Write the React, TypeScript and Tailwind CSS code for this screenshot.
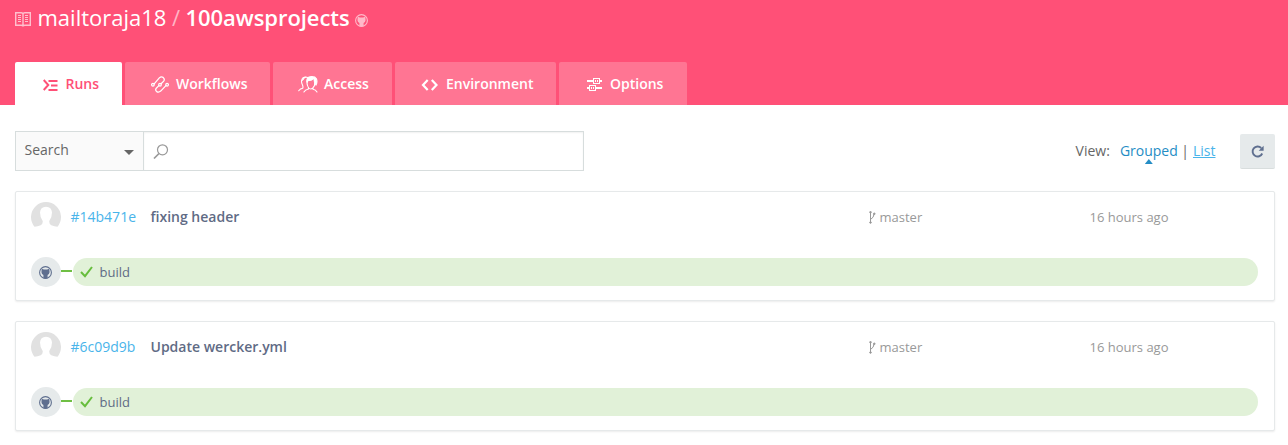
import React from "react";

type IconProps = { className?: string };

function BookIcon({ className }: IconProps) {
  return (
    <svg className={className} width="16" height="15" viewBox="0 0 16 15" fill="none" stroke="currentColor">
      <path d="M.7.700h5.500Q8 .7 8 2Q8 .7 9.800.700h5.500v12.600H9.800Q8 13.400 8 14.600Q8 13.400 6.200 13.300H.700zM8 2v12" strokeWidth="1.400" />
      <path d="M3 3.500h3M3 5.500h3M3 7.500h3M3 9.500h3M10 3.500h3M10 5.500h3M10 7.500h3M10 9.500h3" />
    </svg>
  );
}

function CatIcon({ className }: IconProps) {
  return (
    <svg className={className} viewBox="0 0 13 13" fill="none">
      <circle cx="6.500" cy="6.500" r="5.900" stroke="currentColor" strokeWidth="1.100" />
      <path
        d="M2.800 2.700L4.900 3.500H8.100L10.200 2.700L10.500 5V6.500Q10.300 8.500 8.600 8.900V12.200Q6.500 12.800 4.400 12.200V8.900Q2.700 8.500 2.500 6.500V5z"
        fill="currentColor"
      />
    </svg>
  );
}

function RunsIcon() {
  return (
    <svg width="15" height="12" viewBox="0 0 15 12" fill="none" stroke="currentColor" strokeWidth="2">
      <path d="M.7 1l4.600 5l-4.600 5" />
      <path d="M5.500 2H14.500M8 6.500H14.500M5.500 11H14.500" />
    </svg>
  );
}

function WorkflowsIcon() {
  return (
    <svg width="18" height="17" viewBox="0 0 18 17" fill="none" stroke="currentColor" strokeWidth="1.250" strokeLinecap="round">
      <circle cx="1.900" cy="8.700" r="1.300" />
      <circle cx="9" cy="8.700" r="1.300" />
      <circle cx="16.100" cy="8.700" r="1.300" />
      <path d="M3.200 7.900L8.300 1.900Q10.200.2 12.100 1.400Q14.100 3.100 12.700 5.200L10.100 7.800M7.900 9.600L5.300 12.200Q3.900 14.200 5.700 15.600Q7.700 16.800 9.700 15.100L14.900 9.600" />
    </svg>
  );
}

function AccessIcon() {
  return (
    <svg width="20" height="17" viewBox="0 0 20 17" fill="none" stroke="currentColor" strokeWidth="1.100" strokeLinecap="round">
      <path d="M9.500 1.500Q5 .1 4 3.200Q2.800 6 4.500 9Q5.300 11 4.700 12.200Q2.300 12.500 .7 14.700M4 4.600Q5.500 3.500 6 2.100Q7.500.4 9.500 1.500" />
      <path d="M9.300 4.500Q8.300 8.400 10.400 11.200V13Q7.200 13.600 5.900 16M16.700 6.500Q17 10.200 15 11.700V13.200Q17.700 13.600 19 16M10.400 11.500Q13 14.300 15 11.700" />
      <path d="M8.900 6Q8.300 1.500 12 .8Q17 .1 18.400 2.800Q19.700 6 18 9.100Q16.600 7.300 16.500 4.500Q14 6 8.900 6z" fill="currentColor" />
      <path d="M10 5.300Q13.900 5.300 15.700 3.300V9Q15 12 12.900 12.200Q10.300 12 10 8.600z" fill="#ff7593" stroke="none" />
    </svg>
  );
}

function EnvironmentIcon() {
  return (
    <svg width="17" height="12" viewBox="0 0 17 12" fill="none" stroke="currentColor" strokeWidth="2.200">
      <path d="M6.700 1L2 6l4.700 5M10.800 1L15.500 6l-4.700 5" />
    </svg>
  );
}

function OptionsIcon() {
  return (
    <svg width="15" height="14" viewBox="0 0 15 14" fill="none" stroke="currentColor" shapeRendering="crispEdges">
      <path d="M0 3H6M13 3H15M0 10H2M9 10H15" strokeWidth="2" />
      <rect x="6.500" y=".5" width="6" height="5" />
      <rect x="2.500" y="7.500" width="6" height="5" />
      <path d="M8.500 2v2M10.500 2v2M4.500 9v2M6.500 9v2" />
    </svg>
  );
}

const tabs = [
  { label: "Runs", icon: <RunsIcon />, box: "w-[107px] bg-white text-[#ff5077]", slot: "ml-[27.500px] w-[23px] pt-[2px]" },
  { label: "Workflows", icon: <WorkflowsIcon />, box: "w-[145px] bg-[#ff7593] text-white", slot: "ml-[26px] w-[25px] pt-[2px]" },
  { label: "Access", icon: <AccessIcon />, box: "w-[119px] bg-[#ff7593] text-white", slot: "ml-[25px] w-[26px] pt-[2px]" },
  { label: "Environment", icon: <EnvironmentIcon />, box: "w-[161px] bg-[#ff7593] text-white", slot: "ml-[26px] w-[25px] pt-[3px]" },
  { label: "Options", icon: <OptionsIcon />, box: "w-[128px] bg-[#ff7593] text-white", slot: "ml-[28px] w-[23px] pt-[3px]" },
];

const runs = [
  { hash: "#14b471e", message: "fixing header", branch: "master", time: "16 hours ago" },
  { hash: "#6c09d9b", message: "Update wercker.yml", branch: "master", time: "16 hours ago" },
];

function Avatar() {
  return (
    <svg className="mt-[10px] shrink-0" width="30" height="30" viewBox="0 0 30 30">
      <path
        d="M3.500 24.700A15 15 0 1 1 26.500 24.700Q23.500 24.500 20.300 23.200Q17.900 22 18.300 19Q21 15.500 21 10.500Q20.700 5 15 4.700Q9.300 5 9 10.500Q9 15.500 11.700 19Q12.100 22 9.700 23.200Q6.500 24.500 3.500 24.700z"
        fill="#e1e1e1"
      />
    </svg>
  );
}

function BranchIcon() {
  return (
    <svg width="7" height="13" viewBox="0 0 7 13" fill="none" stroke="currentColor" strokeWidth="1">
      <path d="M1.500 1.500v10M1.500 8.500Q5 6.500 5 3" />
      <circle cx="1.500" cy="1.200" r=".8" fill="currentColor" />
      <circle cx="5.300" cy="2.800" r=".8" fill="currentColor" />
      <circle cx="1.500" cy="11.500" r=".8" fill="currentColor" />
    </svg>
  );
}

function RunCard({ run }: { run: (typeof runs)[number] }) {
  return (
    <article className="h-[110px] rounded-[2px] border border-[#e6e9ea] bg-white pl-[15px] shadow-[0_1px_2px_rgba(0,0,0,0.08)]">
      <div className="flex h-[50px]">
        <Avatar />
        <a className="ml-[9.500px] mt-[15px] w-[80px] text-sm text-[#49b4ea]">{run.hash}</a>
        <span className="mt-[15px] w-[718.500px] text-sm font-semibold text-[#5f6b85]">{run.message}</span>
        <span className="mt-[15px] flex w-[220.500px] gap-[3.500px] text-[13px] leading-5 text-[#999]">
          <span className="pt-[4px]"><BranchIcon /></span>
          {run.branch}
        </span>
        <span className="mt-[15px] text-[13px] leading-5 text-[#999]">{run.time}</span>
      </div>
      <div className="mt-[15px] flex h-[30px] items-center">
        <span className="flex size-[30px] items-center justify-center rounded-full bg-[#e6eaeb] pr-px text-[#5f6f8f]">
          <CatIcon className="size-[13px]" />
        </span>
        <span className="mb-[2px] mr-px h-[2px] w-[11px] bg-[#6fbf44]" />
        <div className="flex h-7 w-[1185px] items-center rounded-full bg-[#e1f1d8] pl-[7px] text-[13px] text-[#5f6b85]">
          <svg width="13" height="12" viewBox="0 0 13 12" fill="none" stroke="#67bd3d" strokeWidth="2">
            <path d="M1 6l4 4.200L12 1" />
          </svg>
          <span className="ml-[6.500px] pt-px">build</span>
        </div>
      </div>
    </article>
  );
}

export default function App() {
  return (
    <div className="h-[445px] overflow-hidden bg-white font-['Open_Sans',sans-serif]">
      <header className="flex h-[105px] flex-col justify-between bg-[#ff5077] pl-[15px]">
        <h1 className="-mt-px flex h-9 items-center text-[22px] leading-9 text-white">
          <BookIcon className="mt-[5px] text-[#ffc0ce]" />
          <span className="ml-[6.500px]">mailtoraja18</span>
          <span className="mx-[5.500px] text-[#ffb4c5]">/</span>
          <span className="font-semibold tracking-[-0.06px]">100awsprojects</span>
          <CatIcon className="ml-[5px] mt-[6px] size-[13px] text-[#ffb9c9]" />
        </h1>
        <nav className="flex gap-[3px]">
          {tabs.map((tab) => (
            <a key={tab.label} className={`flex h-[43px] items-center rounded-t-[2px] text-sm font-semibold ${tab.box}`}>
              <span className={tab.slot}>{tab.icon}</span>
              <span>{tab.label}</span>
            </a>
          ))}
        </nav>
      </header>
      <main className="pl-[15px] pr-[13px] pt-[26px]">
        <div className="flex h-10 items-start text-sm text-[#666]">
          <div className="flex h-10 w-[569px] border border-[#d7dddd]">
            <div className="flex w-[128px] justify-between border-r border-[#d7dddd] bg-[#fafafa] pl-[8.500px] pr-[9px]">
              <span className="pt-[8px]">Search</span>
              <span className="mt-[18px] h-[5px] w-[10px] bg-[#666] [clip-path:polygon(0_0,100%_0,50%_100%)]" />
            </div>
            <div className="flex-1 pl-[9px] pt-[12px] shadow-[inset_0_1px_2px_rgba(0,0,0,0.06)]">
              <svg width="16" height="16" viewBox="0 0 16 16" fill="none" stroke="#999">
                <circle cx="9.500" cy="5.800" r="5" strokeWidth="1.200" />
                <path d="M6 9.500L1 14.500" strokeWidth="1.700" />
              </svg>
            </div>
          </div>
          <div className="ml-auto flex pt-[10px]">
            <span>View:</span>
            <span className="relative ml-[10px] text-[#258dc5]">
              Grouped
              <span className="absolute left-1/2 top-[18px] h-[5px] w-[8px] -translate-x-1/2 bg-[#258dc5] [clip-path:polygon(50%_0,100%_100%,0_100%)]" />
            </span>
            <span className="ml-[3.500px] mr-[4px]">|</span>
            <a className="mr-[.5px] text-[#49b4ea] underline">List</a>
          </div>
          <button className="ml-[24px] mt-[3px] flex h-[35px] w-[35px] items-center justify-center rounded-[2px] border-b border-[#d8dddd] bg-[#e6eaeb] text-[#5f6f8f]">
            <svg width="13" height="13" viewBox="0 0 13 13" fill="none">
              <path d="M10.200 3A5 5 0 1 0 11.200 8.500" stroke="currentColor" strokeWidth="1.900" />
              <path d="M12.600.800v4.900H7.700z" fill="currentColor" />
            </svg>
          </button>
        </div>
        <section className="mt-[20px] flex flex-col gap-5">
          {runs.map((run) => <RunCard key={run.hash} run={run} />)}
        </section>
      </main>
    </div>
  );
}
